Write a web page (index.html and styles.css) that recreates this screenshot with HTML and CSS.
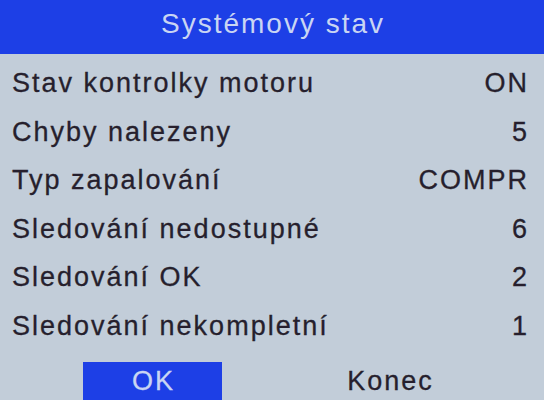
FILE: index.html
```html
<!DOCTYPE html>
<html lang="cs">
<head>
<meta charset="utf-8">
<title>Systémový stav</title>
<link rel="stylesheet" href="styles.css">
</head>
<body>
<div class="screen">
  <header class="title">Systémový stav</header>
  <ul class="list">
    <li class="row"><span class="label">Stav kontrolky motoru</span><span class="value">ON</span></li>
    <li class="row"><span class="label">Chyby nalezeny</span><span class="value">5</span></li>
    <li class="row"><span class="label">Typ zapalování</span><span class="value">COMPR</span></li>
    <li class="row"><span class="label">Sledování nedostupné</span><span class="value">6</span></li>
    <li class="row"><span class="label">Sledování OK</span><span class="value">2</span></li>
    <li class="row"><span class="label">Sledování nekompletní</span><span class="value">1</span></li>
  </ul>
  <footer class="actions">
    <div class="btn btn-active">OK</div>
    <div class="btn">Konec</div>
  </footer>
</div>
</body>
</html>
```
FILE: styles.css
```css
html, body {
  margin: 0;
  padding: 0;
}
body {
  width: 544px;
  height: 400px;
  overflow: hidden;
  background: #c2cdd9;
  font-family: "Liberation Sans", Arial, sans-serif;
  color: #261f2d;
}
.screen {
  display: flex;
  flex-direction: column;
  height: 400px;
}
.title {
  height: 54px;
  line-height: 47px;
  background: #1d3fe6;
  color: #c9d5f3;
  font-size: 28px;
  letter-spacing: 2px;
  text-align: center;
  padding-left: 2px;
}
.list {
  list-style: none;
  margin: 0;
  padding: 5px 15px 0 12px;
}
.row {
  display: flex;
  justify-content: space-between;
  height: 48.5px;
  line-height: 48.5px;
  font-size: 27px;
  letter-spacing: 2px;
  -webkit-text-stroke: 0.3px currentColor;
}
.actions {
  display: flex;
  gap: 98px;
  padding-left: 83px;
  margin-top: 12px;
}
.btn {
  width: 139px;
  height: 38px;
  line-height: 38px;
  font-size: 27px;
  letter-spacing: 2px;
  text-align: center;
  padding-left: 2px;
  box-sizing: border-box;
  -webkit-text-stroke: 0.3px currentColor;
}
.btn-active {
  background: #1d3fe6;
  color: #c9d5f3;
}
```
